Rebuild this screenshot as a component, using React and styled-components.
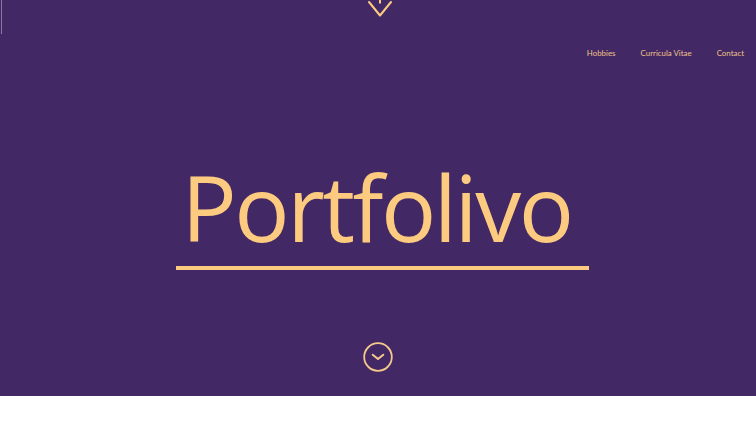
import React from 'react';
import styled, { createGlobalStyle } from 'styled-components';

const Global = createGlobalStyle`
  body {
    margin: 0;
    background: #fff;
    font-family: "Open Sans", "Noto Sans", sans-serif;
  }
`;

const Hero = styled.section`
  position: relative;
  height: 396px;
  background: #432866;
  display: flex;
  flex-direction: column;
  align-items: center;
  border-left: 1px solid transparent;
  &::before{
    content: '';
    position: absolute;
    left: 0;
    top: 0;
    width: 1px;
    height: 34px;
    background: #8a78a6;
  }
`;

const TopArrow = styled.svg`
  display: block;
  width: 24px;
  height: 18px;
  margin-left: 3px;
`;

const Nav = styled.nav`
  align-self: stretch;
  display: flex;
  justify-content: flex-end;
  gap: 25px;
  padding: 0 12px 0 0;
  margin-top: 28px;
  a{
    font-family: Lato, "Open Sans", sans-serif;
    color: #efc387;
    text-decoration: none;
    font-size: 7.9px;
    line-height: 14px;
  }
`;

const TitleWrap = styled.div`
  margin-top: 100px;
  display: flex;
  flex-direction: column;
  align-items: center;
`;

const Title = styled.h1`
  margin: 0;
  font-family: "Open Sans", sans-serif;
  font-weight: 400;
  font-size: 92px;
  line-height: 94px;
  color: #fdcb7f;
  letter-spacing: -2.5px;
  margin-left: -4px;
`;

const Underline = styled.div`
  width: 413px;
  height: 4px;
  background: #fdcb7f;
  margin-top: 12px;
  margin-left: 8px;
`;

const DownButton = styled.svg`
  display: block;
  width: 30px;
  height: 30px;
  margin-top: 72px;
  margin-left: -2px;
`;

const App = () => {
    return (
        <>
            <Global />
            <Hero>
                <TopArrow viewBox="0 0 24 18">
                    <line x1="12" y1="0" x2="12" y2="3.5" stroke="#fdcb7f" strokeWidth="2" />
                    <polyline points="1,2 12,15.5 23,2" fill="none" stroke="#fdcb7f" strokeWidth="2" strokeLinecap="round" strokeLinejoin="round" />
                </TopArrow>
                <Nav>
                    <a href="#hobbies">Hobbies</a>
                    <a href="#cv">Curricula Vitae</a>
                    <a href="#contact">Contact</a>
                </Nav>
                <TitleWrap>
                    <Title>Portfolivo</Title>
                    <Underline />
                </TitleWrap>
                <DownButton viewBox="0 0 30 30">
                    <circle cx="15" cy="15" r="13.8" fill="none" stroke="#f6c98a" strokeWidth="1.8" />
                    <polyline points="9.7,12.7 15,17 20.3,12.7" fill="none" stroke="#f6c98a" strokeWidth="2" strokeLinecap="round" strokeLinejoin="round" />
                </DownButton>
            </Hero>
        </>
    );
};

export default App;
